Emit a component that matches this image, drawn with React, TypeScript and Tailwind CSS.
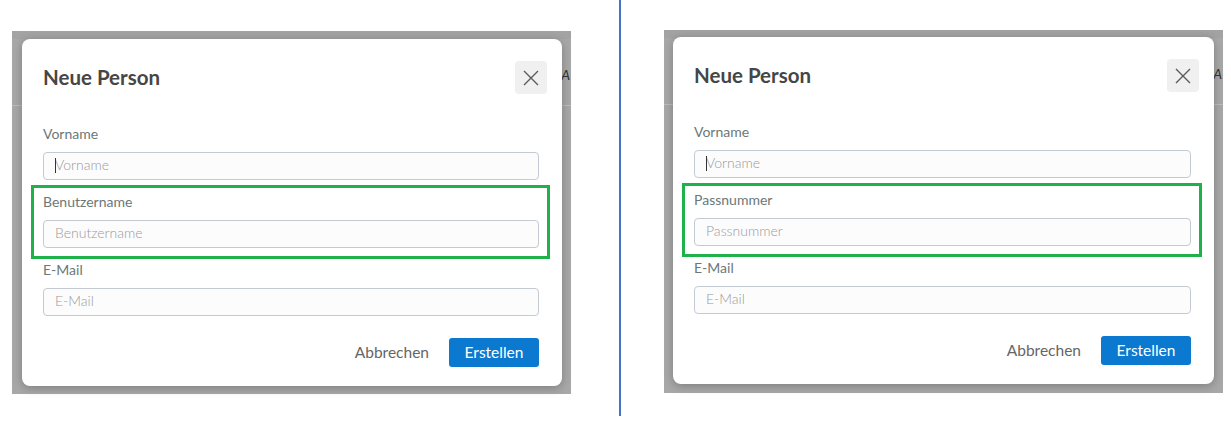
import React from 'react';

interface FieldProps {
  label: string;
  caret?: boolean;
}

const Field: React.FC<FieldProps> = ({ label, caret }) => (
  <div>
    <div className="h-[18px] text-[14px] leading-[18px] text-[#6b7878]">{label}</div>
    <div className="relative mt-[9px]">
      <input
        type="text"
        placeholder={label}
        readOnly
        className="block w-full h-[28px] rounded-[4px] border border-[#c3cad1] bg-[#fcfcfd] px-[11px] pb-[4px] text-[14px] font-light text-[#333] placeholder:text-[#9a9a9a] outline-none"
      />
      {caret && <span className="absolute left-[12px] top-[6px] h-[15px] w-px bg-[#333]"></span>}
    </div>
  </div>
);

const Modal: React.FC<{ middle: string; widthClass: string }> = ({ middle, widthClass }) => (
  <div className={`${widthClass} h-[347px] rounded-[8px] bg-white shadow-[0_2px_10px_rgba(0,0,0,0.25)] pl-[21px] pr-[23px] relative z-10`}>
    {/* Header */}
    <div className="flex items-start justify-between pt-[22px] -mr-[8px]">
      <h2 className="mt-[3px] text-[20.5px] leading-[26px] font-bold text-[#464646]">Neue Person</h2>
      <button className="w-[32px] h-[33px] rounded-[4px] bg-[#f0f0f0] flex items-center justify-center">
        <svg width="16" height="16" viewBox="0 0 16 16" fill="none" stroke="#5a5a5a" strokeWidth="1.4">
          <path d="M1 1 L15 15 M15 1 L1 15" />
        </svg>
      </button>
    </div>

    <div className="mt-[31px]">
      <Field label="Vorname" caret />
    </div>

    {/* Highlighted field */}
    <div className="mt-[5px] -ml-[12px] -mr-[11px] border-[3px] border-[#1fb24a] pl-[9px] pr-[8px] pt-[5px] pb-[8px]">
      <Field label={middle} />
    </div>

    <div className="mt-[2px]">
      <Field label="E-Mail" />
    </div>

    {/* Footer */}
    <div className="mt-[22px] flex items-center justify-end gap-[20px]">
      <button className="text-[15.5px] text-[#666]">Abbrechen</button>
      <button className="w-[90px] h-[29px] rounded-[3px] bg-[#0b79d0] text-[15.5px] text-white">Erstellen</button>
    </div>
  </div>
);

const Backdrop: React.FC<{ middle: string; padClass: string; widthClass: string }> = ({ middle, padClass, widthClass }) => (
  <div className={`relative w-[559px] h-[363px] bg-[#a8a8a8] ${padClass}`}>
    <div className="absolute left-0 right-0 top-0 h-[8px] bg-[#a3a3a3]"></div>
    <div className="absolute left-0 right-0 top-[74px] h-px bg-[#bdbdbd]"></div>
    <span className="absolute right-[1px] top-[33px] text-[14px] italic text-[#333]">-A</span>
    <Modal middle={middle} widthClass={widthClass} />
  </div>
);

export default function App() {
  return (
    <div className="flex h-[427px] w-[1231px] bg-white font-['Lato','Liberation_Sans',sans-serif]">
      <div className="w-[619px] pl-[12px] pt-[31px]">
        <Backdrop middle="Benutzername" padClass="pl-[10px] pt-[8px]" widthClass="w-[540px]" />
      </div>
      <div className="w-[2px] h-[416px] bg-[#4472c4]"></div>
      <div className="pl-[43px] pt-[30px]">
        <Backdrop middle="Passnummer" padClass="pl-[9px] pt-[7px]" widthClass="w-[541px]" />
      </div>
    </div>
  );
}
